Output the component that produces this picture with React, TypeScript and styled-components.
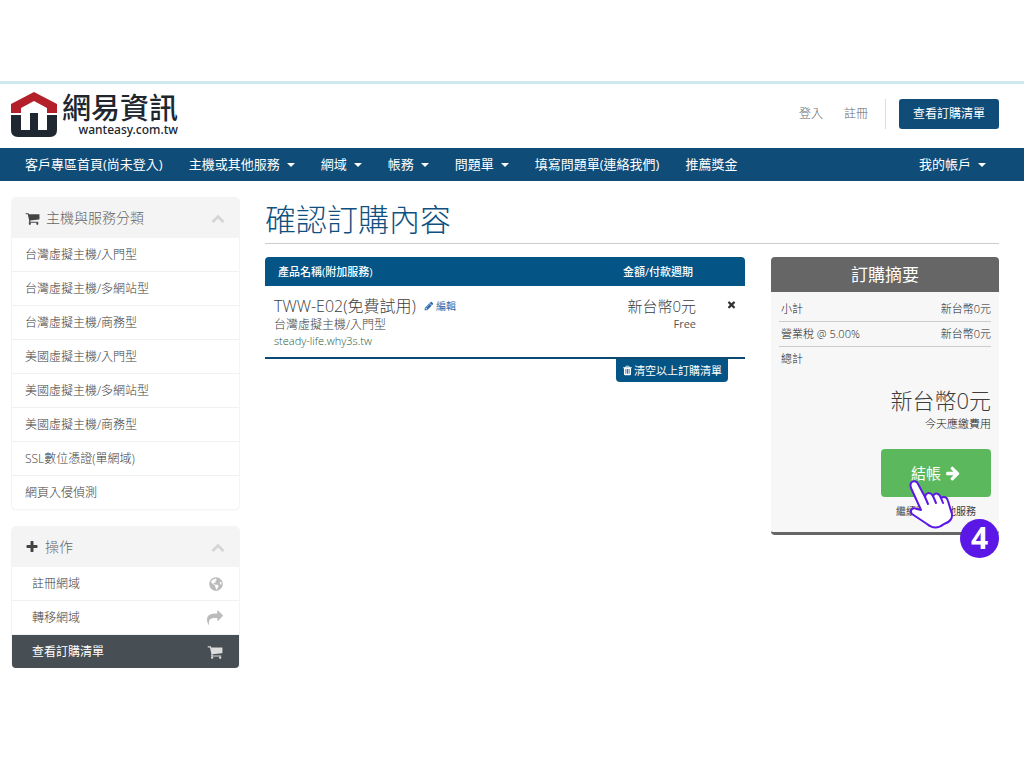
import React from "react";
import styled, { createGlobalStyle, css } from "styled-components";
import { FaGlobeAmericas } from "react-icons/fa";

const GlobalStyle = createGlobalStyle`
  * { box-sizing: border-box; }
  body {
    margin: 0;
    background: #fff;
    color: #3c3c3c;
    font-family: "Open Sans", "Noto Sans CJK TC", sans-serif;
    font-size: 12px;
    line-height: 16px;
  }
  a { color: inherit; text-decoration: none; }
  button { font: inherit; cursor: pointer; }
  ul { list-style: none; margin: 0; padding: 0; }
`;

const icons = {
  cart: "M704 1536q0 52-38 90t-90 38-90-38-38-90 38-90 90-38 90 38 38 90zm896 0q0 52-38 90t-90 38-90-38-38-90 38-90 90-38 90 38 38 90zm128-1088v512q0 24-16.5 42.5t-40.5 21.5l-1044 122q13 60 13 70 0 16-24 64h920q26 0 45 19t19 45-19 45-45 19h-1024q-26 0-45-19t-19-45q0-11 8-31.5t16-36 21.5-40 15.5-29.5l-177-823h-204q-26 0-45-19t-19-45 19-45 45-19h256q16 0 28.5 6.5t19.5 15.5 13 24.5 8 26 5.5 29.5 4.5 26h1201q26 0 45 19t19 45z",
  plus: "M1600 736v192q0 40-28 68t-68 28h-416v416q0 40-28 68t-68 28h-192q-40 0-68-28t-28-68v-416h-416q-40 0-68-28t-28-68v-192q0-40 28-68t68-28h416v-416q0-40 28-68t68-28h192q40 0 68 28t28 68v416h416q40 0 68 28t28 68z",
  times: "M1490 1322q0 40-28 68l-136 136q-28 28-68 28t-68-28l-294-294-294 294q-28 28-68 28t-68-28l-136-136q-28-28-28-68t28-68l294-294-294-294q-28-28-28-68t28-68l136-136q28-28 68-28t68 28l294 294 294-294q28-28 68-28t68 28l136 136q28 28 28 68t-28 68l-294 294 294 294q28 28 28 68z",
  share: "M1792 640q0 26-19 45l-512 512q-19 19-45 19t-45-19-19-45v-256h-224q-98 0-175.5 6t-154 21.5-133 42.5-105.5 69.5-80 101-48.5 138.5-17.5 181q0 55 5 123 0 6 2.5 23.5t2.5 26.5q0 15-8.5 25t-23.5 10q-16 0-28-17-7-9-13-22t-13.5-30-10.5-24q-127-285-127-451 0-199 53-333 162-403 875-403h224v-256q0-26 19-45t45-19 45 19l512 512q19 19 19 45z",
  arrow: "M1600 960q0 54-37 91l-651 651q-39 37-91 37-51 0-90-37l-75-75q-38-38-38-91t38-91l293-293h-704q-52 0-84.5-37.5t-32.5-90.5v-128q0-53 32.5-90.5t84.5-37.5h704l-293-294q-38-36-38-90t38-90l75-75q38-38 90-38 53 0 91 38l651 651q37 35 37 90z",
  trash: "M704 1376v-704q0-14-9-23t-23-9h-64q-14 0-23 9t-9 23v704q0 14 9 23t23 9h64q14 0 23-9t9-23zm256 0v-704q0-14-9-23t-23-9h-64q-14 0-23 9t-9 23v704q0 14 9 23t23 9h64q14 0 23-9t9-23zm256 0v-704q0-14-9-23t-23-9h-64q-14 0-23 9t-9 23v704q0 14 9 23t23 9h64q14 0 23-9t9-23zm-544-992h448l-48-117q-7-9-17-11h-317q-10 2-17 11zm928 32v64q0 14-9 23t-23 9h-96v948q0 83-47 143.5t-113 60.5h-832q-66 0-113-58.5t-47-141.5v-952h-96q-14 0-23-9t-9-23v-64q0-14 9-23t23-9h309l70-167q15-37 54-63t79-26h320q40 0 79 26t54 63l70 167h309q14 0 23 9t9 23z",
  pencil: "M491 1536l91-91-235-235-91 91v107h128v128h107zm523-928q0-22-22-22-10 0-17 7l-542 542q-7 7-7 17 0 22 22 22 10 0 17-7l542-542q7-7 7-17zm-54-192l416 416-832 832h-416v-416zm683 96q0 53-37 90l-166 166-416-416 166-165q36-38 90-38 53 0 91 38l235 234q37 39 37 91z",
  up: "M1683 1331l-166 165q-19 19-45 19t-45-19l-531-531-531 531q-19 19-45 19t-45-19l-166-165q-19-19-19-45.5t19-45.5l742-741q19-19 45-19t45 19l742 741q19 19 19 45.5t-19 45.5z",
};

function Icon({ name, size }: { name: keyof typeof icons; size: number }) {
  return (
    <svg width={size} height={size} viewBox="0 0 1792 1792" fill="currentColor" aria-hidden="true">
      <path d={icons[name]} />
    </svg>
  );
}

const Page = styled.div`
  padding-top: 81px;
`;

const Header = styled.header`
  display: flex;
  justify-content: space-between;
  align-items: flex-start;
  height: 67px;
  padding: 8px 25px 0 11px;
  border-top: 3px solid #cfe8ee;
`;

const Logo = styled.a`
  display: flex;
  gap: 5px;
  color: #20262e;
`;

const LogoWords = styled.span`
  display: flex;
  flex-direction: column;
  align-items: flex-end;
`;

const LogoName = styled.span`
  font-size: 29px;
  line-height: 32px;
  font-weight: 500;
`;

const LogoDomain = styled.span`
  font-family: "Noto Sans", sans-serif;
  font-size: 12px;
  line-height: 12px;
  font-weight: 500;
`;

const Account = styled.div`
  display: flex;
  align-items: center;
  margin-top: 7px;
  color: #666;
`;

const AccountLink = styled.a`
  margin-right: 21px;
  font-weight: 300;
`;

const CartLink = styled.a`
  display: flex;
  align-items: center;
  height: 30px;
  padding: 0 14px;
  border-radius: 3px;
  background: #0f4d78;
  color: #fff;
`;

const Divider = styled.span`
  width: 1px;
  height: 30px;
  margin: 0 13px 0 -4px;
  background: #ddd;
`;

const Nav = styled.nav`
  display: flex;
  align-items: center;
  height: 33px;
  padding: 0 25px 2px 12px;
  background: #0f4d78;
  color: #fff;
  font-size: 13px;

  a:last-child { margin-left: auto; }
`;

const NavItem = styled.a`
  display: flex;
  align-items: center;
  gap: 7px;
  padding: 0 13px;
`;

const Caret = styled.span`
  margin-top: 2px;
  border: 4px solid transparent;
  border-top-color: currentColor;
  border-bottom: 0;
`;

const Columns = styled.div`
  display: grid;
  grid-template-columns: 227fr 734fr;
  gap: 26px;
  padding: 17px 25px 0 12px;
`;

const Sidebar = styled.aside`
  display: flex;
  flex-direction: column;
  gap: 18px;
`;

const Panel = styled.section`
  border-radius: 4px;
  box-shadow: 0 0 0 1px #f4f4f4, 0 1px 2px rgba(0, 0, 0, 0.08);
  overflow: hidden;
`;

const PanelHead = styled.h2`
  display: flex;
  align-items: center;
  justify-content: space-between;
  height: 40px;
  margin: 0;
  padding: 0 14px 0 13px;
  background: #f4f4f4;
  color: #666;
  font-size: 14px;
  font-weight: 300;
`;

const PanelTitle = styled.span`
  display: flex;
  align-items: center;
  gap: 6px;

  svg { color: #444; }
`;

const Fold = styled.button`
  display: flex;
  padding: 0;
  border: 0;
  background: none;
  color: #d5d5d5;
`;

const PanelRow = styled.li`
  & + & { border-top: 1px solid #f1f1f1; }
`;

const PanelLink = styled.a<{ $inset?: boolean; $active?: boolean }>`
  display: flex;
  align-items: center;
  justify-content: space-between;
  height: 33px;
  padding: 0 16px 0 ${(p) => (p.$inset ? 20 : 13)}px;
  font-weight: 300;

  svg { color: #bbb; }

  ${(p) => p.$active && css`
    background: #474f54;
    color: #fff;
    font-weight: 400;
    svg { color: #ddd; }
  `}
`;

const Title = styled.h1`
  margin: 0 0 13px;
  padding-bottom: 3px;
  border-bottom: 1px solid #ccc;
  color: #0f5080;
  font-size: 31px;
  line-height: 42px;
  font-weight: 300;
`;

const Order = styled.div`
  display: grid;
  grid-template-columns: 480fr 228fr;
  align-items: start;
  gap: 26px;
`;

const Cart = styled.section`
  display: flex;
  flex-direction: column;
`;

const CartTable = styled.table`
  width: 100%;
  border-collapse: separate;
  border-spacing: 0;
  border-bottom: 2px solid #0c4a74;
`;

const Th = styled.th<{ $align: string }>`
  height: 29px;
  padding: 0 13px;
  background: #045486;
  color: #fff;
  font-size: 11px;
  font-weight: 500;
  text-align: ${(p) => p.$align};

  &:first-child { border-top-left-radius: 4px; }
  &:last-child { border-top-right-radius: 4px; }
`;

const Td = styled.td<{ $width?: number; $align?: string }>`
  height: 71px;
  padding: ${(p) => (p.$align === "center" ? "10px 0 0 22px" : "9px 0 0 9px")};
  width: ${(p) => (p.$width ? `${p.$width}px` : "auto")};
  text-align: ${(p) => p.$align || "left"};
  vertical-align: top;
`;

const Line = styled.div`
  display: flex;
  align-items: center;
  gap: 8px;
`;

const Product = styled.span`
  font-size: 16px;
  line-height: 22px;
  font-weight: 300;
`;

const Price = styled.div`
  font-size: 15px;
  line-height: 22px;
  font-weight: 300;
`;

const Cycle = styled.div`
  font-size: 11px;
  line-height: 14px;
  color: #555;
`;

const Group = styled.div`
  font-weight: 300;
`;

const Domain = styled.div`
  color: #1f5a38;
  font-size: 11px;
  font-weight: 300;
`;

const Edit = styled.a`
  display: flex;
  align-items: center;
  gap: 2px;
  color: #2c69ad;
  font-size: 10px;
`;

const Remove = styled.button`
  padding: 0;
  border: 0;
  background: none;
  color: #333;
  line-height: 16px;

  svg { display: block; margin: 3px auto; }
`;

const Clear = styled.button`
  display: flex;
  align-items: center;
  justify-content: center;
  gap: 1px;
  align-self: flex-end;
  height: 23px;
  margin-right: 17px;
  padding: 0 6px;
  border: 0;
  border-radius: 0 0 4px 4px;
  background: #045486;
  color: #fff;
  font-size: 11px;
`;

const Summary = styled.section`
  border-bottom: 3px solid #666;
  border-radius: 4px;
  background: #f7f7f7;
`;

const SummaryTitle = styled.h2`
  margin: 0;
  border-radius: 4px 4px 0 0;
  background: #666;
  color: #fff;
  font-size: 17px;
  line-height: 35px;
  font-weight: 400;
  text-align: center;
`;

const SummaryBody = styled.div`
  display: flex;
  flex-direction: column;
  align-items: flex-end;
  padding: 5px 8px 13px;
`;

const SummaryRow = styled.div<{ $last?: boolean }>`
  display: flex;
  justify-content: space-between;
  align-items: center;
  width: 100%;
  height: 25px;
  padding-left: 2px;
  border-bottom: 1px solid ${(p) => (p.$last ? "transparent" : "#ccc")};
  color: #222;
  font-size: 11px;
  font-weight: 300;
`;

const Total = styled.strong`
  margin-top: 12px;
  font-size: 22px;
  line-height: 32px;
  font-weight: 300;
`;

const Due = styled.span`
  color: #222;
  font-size: 11px;
  font-weight: 300;
`;

const CheckoutArea = styled.div`
  position: relative;
  display: flex;
  flex-direction: column;
  align-items: center;
  margin-top: 17px;
`;

const Checkout = styled.button`
  display: flex;
  align-items: center;
  justify-content: center;
  gap: 4px;
  width: 110px;
  height: 48px;
  padding: 0;
  border: 0;
  border-radius: 4px;
  background: #5cb85c;
  color: #fff;
  font-size: 15px;
`;

const Continue = styled.a`
  margin-top: 6px;
  font-size: 10px;
`;

const Hand = styled.svg`
  position: absolute;
  top: 30px;
  left: 27px;
`;

const Step = styled.span`
  position: absolute;
  top: 70px;
  right: -8px;
  width: 39px;
  height: 39px;
  border-radius: 50%;
  background: #5b17e6;
  color: #fff;
  font-family: "Noto Sans", sans-serif;
  font-size: 30px;
  line-height: 37px;
  font-weight: 700;
  text-align: center;
`;

const navItems = [
  { label: "客戶專區首頁(尚未登入)" },
  { label: "主機或其他服務", menu: true },
  { label: "網域", menu: true },
  { label: "帳務", menu: true },
  { label: "問題單", menu: true },
  { label: "填寫問題單(連絡我們)" },
  { label: "推薦獎金" },
  { label: "我的帳戶", menu: true },
];

const categories = [
  "台灣虛擬主機/入門型",
  "台灣虛擬主機/多網站型",
  "台灣虛擬主機/商務型",
  "美國虛擬主機/入門型",
  "美國虛擬主機/多網站型",
  "美國虛擬主機/商務型",
  "SSL數位憑證(單網域)",
  "網頁入侵偵測",
];

export default function App() {
  return (
    <Page>
      <GlobalStyle />
      <Header>
        <Logo href="#">
          <svg width="46" height="46" viewBox="0 0 46 46" aria-hidden="true">
            <path d="M0 21V12L23 0l23 12v9H36v-5L23 9 10 16v5z" fill="#b3202a" />
            <path d="M0 23h10v15h9V21h8v17h9V23h10v15q0 7-7 7H7q-7 0-7-7z" fill="#1f2830" />
          </svg>
          <LogoWords>
            <LogoName>網易資訊</LogoName>
            <LogoDomain>wanteasy.com.tw</LogoDomain>
          </LogoWords>
        </Logo>
        <Account>
          <AccountLink href="#">登入</AccountLink>
          <AccountLink href="#">註冊</AccountLink>
          <Divider />
          <CartLink href="#">查看訂購清單</CartLink>
        </Account>
      </Header>
      <Nav>
        {navItems.map((item) => (
          <NavItem href="#" key={item.label}>
            {item.label}
            {item.menu && <Caret />}
          </NavItem>
        ))}
      </Nav>
      <Columns>
        <Sidebar>
          <Panel>
            <PanelHead>
              <PanelTitle><Icon name="cart" size={15} />主機與服務分類</PanelTitle>
              <Fold aria-label="收合"><Icon name="up" size={14} /></Fold>
            </PanelHead>
            <ul>
              {categories.map((c) => (
                <PanelRow key={c}><PanelLink href="#">{c}</PanelLink></PanelRow>
              ))}
            </ul>
          </Panel>
          <Panel>
            <PanelHead>
              <PanelTitle><Icon name="plus" size={14} />操作</PanelTitle>
              <Fold aria-label="收合"><Icon name="up" size={14} /></Fold>
            </PanelHead>
            <ul>
              <PanelRow><PanelLink href="#" $inset>註冊網域<FaGlobeAmericas size={14} /></PanelLink></PanelRow>
              <PanelRow><PanelLink href="#" $inset>轉移網域<Icon name="share" size={16} /></PanelLink></PanelRow>
              <PanelRow><PanelLink href="#" $inset $active>查看訂購清單<Icon name="cart" size={16} /></PanelLink></PanelRow>
            </ul>
          </Panel>
        </Sidebar>
        <main>
          <Title>確認訂購內容</Title>
          <Order>
            <Cart>
              <CartTable>
                <thead>
                  <tr>
                    <Th $align="left">產品名稱(附加服務)</Th>
                    <Th $align="center" colSpan={2}>金額/付款週期</Th>
                  </tr>
                </thead>
                <tbody>
                  <tr>
                    <Td>
                      <Line>
                        <Product>TWW-E02(免費試用)</Product>
                        <Edit href="#"><Icon name="pencil" size={10} />編輯</Edit>
                      </Line>
                      <Group>台灣虛擬主機/入門型</Group>
                      <Domain>steady-life.why3s.tw</Domain>
                    </Td>
                    <Td $width={125} $align="right">
                      <Price>新台幣0元</Price>
                      <Cycle>Free</Cycle>
                    </Td>
                    <Td $width={49} $align="center">
                      <Remove aria-label="移除"><Icon name="times" size={11} /></Remove>
                    </Td>
                  </tr>
                </tbody>
              </CartTable>
              <Clear><Icon name="trash" size={11} />清空以上訂購清單</Clear>
            </Cart>
            <Summary>
              <SummaryTitle>訂購摘要</SummaryTitle>
              <SummaryBody>
                <SummaryRow><span>小計</span><span>新台幣0元</span></SummaryRow>
                <SummaryRow><span>營業稅 @ 5.00%</span><span>新台幣0元</span></SummaryRow>
                <SummaryRow $last><span>總計</span></SummaryRow>
                <Total>新台幣0元</Total>
                <Due>今天應繳費用</Due>
                <CheckoutArea>
                  <Checkout>結帳<Icon name="arrow" size={16} /></Checkout>
                  <Continue href="#">繼續購買其他服務</Continue>
                  <Hand width="46" height="51" viewBox="0 0 46 51" aria-hidden="true">
                    <path
                      d="M3 4C5 1 9 2 10 5L17 18C18 13 22 13 25 17C27 13 31 14 33 19C36 17 39 18 40 22L43 32C46 39 42 43 36 45C31 49 25 50 19 45L4 35C1 31 5 28 9 30L13 31L3 9Q2 6 3 4Z"
                      fill="#fff"
                      stroke="#5b17e6"
                      strokeWidth="2"
                      strokeLinejoin="round"
                    />
                    <path d="M17 18l3 7M25 17l3 7M33 19l2 5" fill="none" stroke="#5b17e6" strokeWidth="2" strokeLinecap="round" />
                  </Hand>
                  <Step>4</Step>
                </CheckoutArea>
              </SummaryBody>
            </Summary>
          </Order>
        </main>
      </Columns>
    </Page>
  );
}
